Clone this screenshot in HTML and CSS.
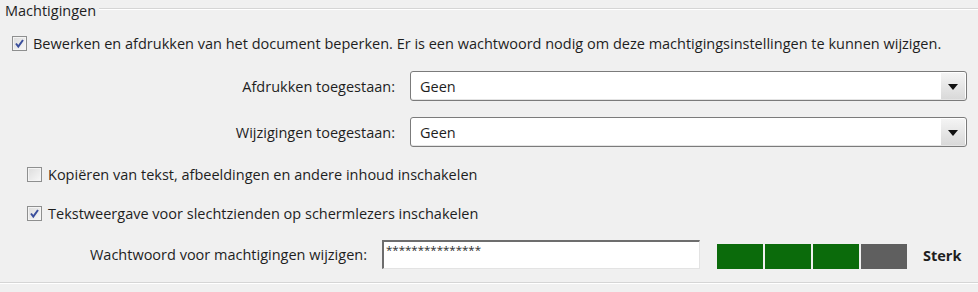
FILE: index.html
```html
<!DOCTYPE html>
<html lang="nl">
<head>
    <meta charset="UTF-8">
    <title>Machtigingen</title>
    <link rel="stylesheet" href="styles.css">
</head>
<body>
    <div class="group">
        <div class="group-title">
            <span>Machtigingen</span>
            <div class="group-line"></div>
        </div>

        <div class="check-row top">
            <span class="checkbox checked"><svg viewBox="0 0 13 13"><path d="M3 6.5 L5.3 9.5 L10 3" /></svg></span>
            <span>Bewerken en afdrukken van het document beperken. Er is een wachtwoord nodig om deze machtigingsinstellingen te kunnen wijzigen.</span>
        </div>

        <div class="select-grid">
            <label>Afdrukken toegestaan:</label>
            <div class="select">
                <span class="select-value">Geen</span>
                <span class="select-arrow"></span>
            </div>
            <label>Wijzigingen toegestaan:</label>
            <div class="select">
                <span class="select-value">Geen</span>
                <span class="select-arrow"></span>
            </div>
        </div>

        <div class="check-row sub first">
            <span class="checkbox"></span>
            <span>Kopiëren van tekst, afbeeldingen en andere inhoud inschakelen</span>
        </div>

        <div class="check-row sub second">
            <span class="checkbox checked"><svg viewBox="0 0 13 13"><path d="M3 6.5 L5.3 9.5 L10 3" /></svg></span>
            <span>Tekstweergave voor slechtzienden op schermlezers inschakelen</span>
        </div>

        <div class="password-row">
            <label class="password-label">Wachtwoord voor machtigingen wijzigen:</label>
            <div class="password-input">***************</div>
            <div class="strength">
                <span class="bar on"></span>
                <span class="bar on"></span>
                <span class="bar on"></span>
                <span class="bar"></span>
            </div>
            <span class="strength-text">Sterk</span>
        </div>

        <div class="bottom-line"></div>
    </div>
</body>
</html>
```

FILE: styles.css
```css
:root {
    --bg-color: #f0f0f0;
    --text-color: #1e1e1e;
    --line-dark: #d5d5d5;
    --line-light: #ffffff;
    --bar-on: #0b6b0b;
    --bar-off: #5f5f5f;
}

body {
    margin: 0;
    background-color: var(--bg-color);
    color: var(--text-color);
    font-family: "Open Sans", "Noto Sans", sans-serif;
    font-size: 14.5px;
    width: 978px;
    height: 292px;
    overflow: hidden;
}

.group-title {
    display: flex;
    align-items: center;
    height: 20px;
    padding-left: 5px;
}

.group-line {
    flex: 1;
    margin-left: 3px;
    margin-top: -2px;
    border-top: 1px solid var(--line-dark);
    border-bottom: 1px solid var(--line-light);
}

.check-row {
    display: flex;
    align-items: center;
    height: 13px;
    gap: 6px;
}

.check-row.top {
    margin-top: 17px;
    padding-left: 12px;
}

.check-row.sub {
    padding-left: 27px;
}

.check-row.first {
    margin-top: 21px;
}

.check-row.second {
    margin-top: 26px;
}

.checkbox {
    width: 13px;
    height: 13px;
    flex: none;
    border: 1px solid #8e8f8f;
    background: linear-gradient(135deg, #dcdcdc, #f8f8f8);
    box-shadow: inset 0 0 0 1px #f4f4f4;
    display: flex;
}

.checkbox svg {
    width: 13px;
    height: 13px;
}

.checkbox path {
    fill: none;
    stroke: #3a4e9c;
    stroke-width: 2;
}

.select-grid {
    display: grid;
    grid-template-columns: 395px 557px;
    column-gap: 15px;
    row-gap: 16px;
    margin-top: 21px;
}

.select-grid label {
    text-align: right;
    align-self: center;
}

.select {
    height: 28px;
    border: 1px solid #7b7b7b;
    border-radius: 3px;
    background: #fff;
    display: flex;
    align-items: center;
    box-shadow: inset 0 -1px 0 #e4e4e4;
}

.select-value {
    flex: 1;
    padding-left: 9px;
}

.select-arrow {
    width: 24px;
    height: 26px;
    margin-right: 1px;
    background: linear-gradient(#f4f4f4, #d9d9d9);
    position: relative;
}

.select-arrow::after {
    content: "";
    position: absolute;
    left: 7px;
    top: 11px;
    border-left: 5px solid transparent;
    border-right: 5px solid transparent;
    border-top: 6px solid #111;
}

.password-row {
    display: flex;
    align-items: center;
    margin-top: 20px;
    height: 29px;
}

.password-label {
    width: 367px;
    text-align: right;
    margin-right: 15px;
}

.password-input {
    box-sizing: border-box;
    height: 29px;
    width: 318px;
    background: #fff;
    border-top: 2px solid #6d6d6d;
    border-left: 2px solid #6d6d6d;
    border-right: 1px solid #e3e3e3;
    border-bottom: 1px solid #e3e3e3;
    font-size: 11.5px;
    line-height: 14px;
    padding: 1px 0 0 2px;
    align-self: flex-start;
    color: #2a2a2a;
}

.strength {
    display: flex;
    gap: 2px;
    margin-left: 17px;
    margin-top: 3px;
}

.bar {
    width: 46px;
    height: 25px;
    background: var(--bar-off);
}

.bar.on {
    background: var(--bar-on);
}

.strength-text {
    margin-left: 16px;
    font-weight: bold;
    margin-top: 2px;
}

.bottom-line {
    margin-top: 13px;
    border-top: 1px solid var(--line-dark);
    border-bottom: 1px solid var(--line-light);
}
```
